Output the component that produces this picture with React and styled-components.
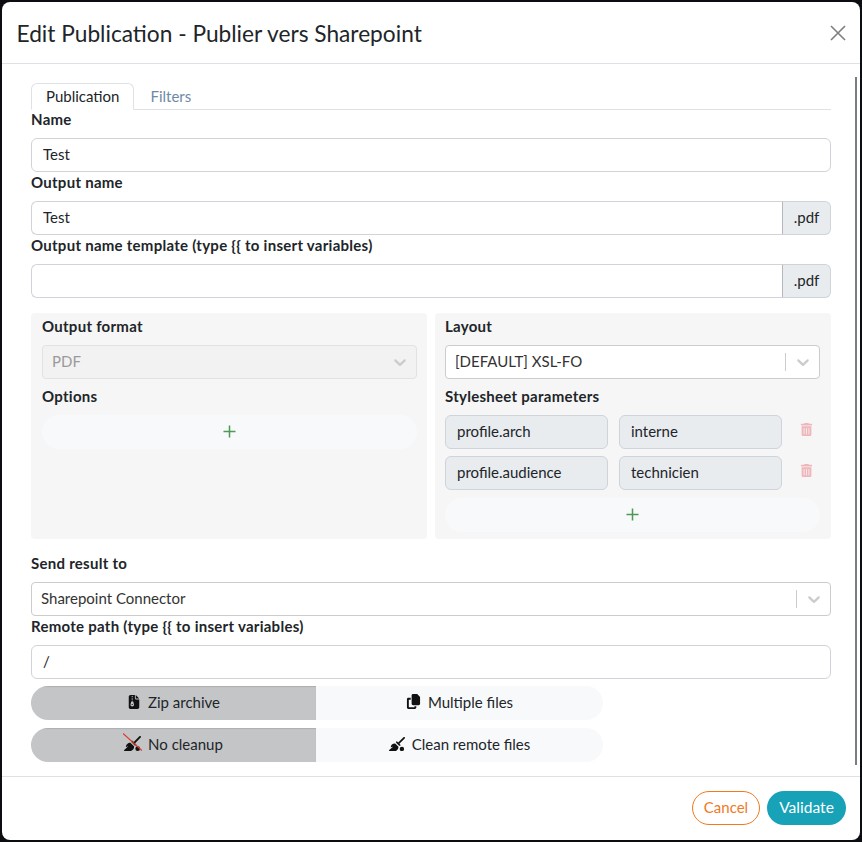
import React from 'react';
import styled, { createGlobalStyle } from 'styled-components';
import { FaFileZipper, FaCopy, FaBroomBall, FaTrashCan } from 'react-icons/fa6';

const Global = createGlobalStyle`
  html, body { margin: 0; padding: 0; background: #0c0d10; }
  * { box-sizing: border-box; }
  body { font-family: "Lato", "Noto Sans", sans-serif; font-size: 15px; color: #212529; }
`;
const Backdrop = styled.div`width: 862px; height: 842px; padding: 2px; overflow: hidden;`;
const Modal = styled.div`position: relative; width: 858px; height: 838px; background: #fff; border-radius: 8px; display: flex; flex-direction: column; overflow: hidden;`;
const Header = styled.header`height: 62px; flex: none; display: flex; align-items: center; justify-content: space-between; padding: 1px 13px 0 14.5px; border-bottom: 1px solid #dee2e6;`;
const Title = styled.h1`margin: 0; font-size: 22.7px; font-weight: 400; color: #212529;`;
const Close = styled.button`border: 0; background: none; padding: 0; width: 18px; height: 18px; color: #7f7f7f; display: flex;`;
const Body = styled.main`flex: 1; padding: 19px 29px 0; min-height: 0;`;
const Scroll = styled.div`position: absolute; right: 3px; top: 75px; width: 2px; height: 688px; background: #7a7e84;`;
const Tabs = styled.nav`display: flex; gap: 1px; height: 27px; border-bottom: 1px solid #dee2e6; margin-bottom: -1px;`;
const Tab = styled.div`
  height: 27px; padding: 0 14px 2px; display: flex; align-items: center;
  color: ${p => p.$active ? '#212529' : '#6c8ba8'};
  border: 1px solid ${p => p.$active ? '#dee2e6' : 'transparent'};
  border-bottom: 1px solid ${p => p.$active ? '#fff' : 'transparent'};
  border-radius: 6px 6px 0 0; background: ${p => p.$active ? '#fff' : 'transparent'};
`;
const Label = styled.label`display: block; font-weight: 700; font-size: 15px; letter-spacing: .27px; line-height: 21px; margin-bottom: 8px; color: #212529;`;
const Input = styled.div`
  height: 34px; border: 1px solid #ced4da; border-radius: 6px; padding: 0 11px 2px; display: flex; align-items: center; color: #212529; background: #fff; flex: 1;
`;
const InputGroup = styled.div`display: flex; height: 34px;`;
const GroupInput = styled(Input)`border-radius: 6px 0 0 6px; border-right: 0;`;
const Addon = styled.div`width: 49px; height: 34px; border: 1px solid #ced4da; border-left-color: #b4b8bc; border-radius: 0 6px 6px 0; background: #e9ecef; display: flex; align-items: center; justify-content: center; padding-bottom: 2px;`;
const Panels = styled.div`display: grid; grid-template-columns: 396px 396px; gap: 8px; margin: 15px 0 14px;`;
const Panel = styled.section`background: #f6f6f6; border-radius: 4px; padding: 3px ${p => p.$right}px 7px ${p => p.$left}px; display: flex; flex-direction: column;`;
const Select = styled.div`
  height: 34px; border: 1px solid ${p => p.$disabled ? '#e2e2e2' : '#ccc'}; border-radius: 4px; display: flex; align-items: center; padding-left: 9px; font-size: 15px;
  background: ${p => p.$disabled ? '#f2f2f2' : '#fff'}; color: ${p => p.$disabled ? '#9a9a9a' : '#333'}; margin-bottom: ${p => p.$mb ?? 0}px;
`;
const SelectValue = styled.span`flex: 1; padding-bottom: 2px;`;
const Sep = styled.span`width: 1px; height: 18px; background: #ccc;`;
const Chevron = styled.span`width: 33px; display: flex; justify-content: center; color: #ccc;`;
const AddBtn = styled.button`
  width: 100%; height: 34px; margin-top: ${p => p.$mt ?? 0}px; border: 0; border-radius: 17px; background: #f8f9fa; color: #4d9a57; display: flex; align-items: center; justify-content: center; padding: 0 0 2px;
`;
const ParamRow = styled.div`display: grid; grid-template-columns: 163px 163px 1fr; column-gap: 11px; margin-bottom: 7px; align-items: center;`;
const ParamInput = styled(Input)`background: #e9ecef;`;
const Trash = styled.span`display: flex; justify-content: center; color: #efb6bb; font-size: 13px; margin-top: -5px;`;
const Toggle = styled.div`display: flex; width: 572px; height: 34px; margin-top: ${p => p.$mt}px; border-radius: 17px; overflow: hidden;`;
const ToggleBtn = styled.button`
  flex: 0 0 ${p => p.$w}px; border: 0; padding: 0 0 3px; display: flex; align-items: center; justify-content: center; gap: 7px; font-family: inherit; font-size: 15px; color: #212529;
  background: ${p => p.$on ? '#c4c5c7' : '#f8f9fa'};
  box-shadow: ${p => p.$on ? 'inset 0 1px 1px rgba(0,0,0,.12)' : 'none'};
`;
const IconWrap = styled.span`position: relative; display: flex; color: #111;`;
const Slash = styled.svg`position: absolute; left: -1px; top: -2px; width: 19px; height: 18px;`;
const Footer = styled.footer`height: 64px; flex: none; border-top: 1px solid #dee2e6; display: flex; justify-content: flex-end; align-items: center; gap: 7px; padding: 0 14px 1px 0;`;
const Cancel = styled.button`height: 34px; width: 68px; border: 1px solid #f07a1e; border-radius: 17px; background: #fff; color: #f07a1e; font-family: inherit; font-size: 15px; padding: 0 0 2px;`;
const Validate = styled.button`height: 34px; width: 79px; border: 0; border-radius: 17px; background: #17a2b8; color: #fff; font-family: inherit; font-size: 15.6px; padding: 0 0 2px;`;

const ChevronIcon = () => (
  <svg width="20" height="20" viewBox="0 0 20 20" fill="currentColor"><path d="M4.516 7.548c.436-.446 1.043-.481 1.576 0L10 11.295l3.908-3.747c.533-.481 1.141-.446 1.574 0 .436.445.408 1.197 0 1.615-.406.418-4.695 4.502-4.695 4.502a1.095 1.095 0 0 1-1.576 0S4.924 9.581 4.516 9.163c-.409-.418-.436-1.17 0-1.615z"/></svg>
);
const PlusIcon = () => (
  <svg width="13" height="13" viewBox="0 0 13 13" stroke="currentColor" strokeWidth="1.5"><path d="M6.5 0.5v12M0.5 6.5h12"/></svg>
);

export default function App() {
  return (
    <Backdrop>
      <Global />
      <Modal>
        <Header>
          <Title>Edit Publication - Publier vers Sharepoint</Title>
          <Close aria-label="Close">
            <svg width="18" height="18" viewBox="0 0 18 18" stroke="currentColor" strokeWidth="1.6"><path d="M2 2l14 14M16 2L2 16"/></svg>
          </Close>
        </Header>
        <Scroll />
        <Body>
          <Tabs>
            <Tab $active>Publication</Tab>
            <Tab>Filters</Tab>
          </Tabs>
          <Label>Name</Label>
          <Input>Test</Input>
          <Label>Output name</Label>
          <InputGroup><GroupInput>Test</GroupInput><Addon>.pdf</Addon></InputGroup>
          <Label>Output name template (type {'{{'} to insert variables)</Label>
          <InputGroup><GroupInput /><Addon>.pdf</Addon></InputGroup>
          <Panels>
            <Panel $left={11} $right={10}>
              <Label>Output format</Label>
              <Select $disabled $mb={7}>
                <SelectValue>PDF</SelectValue>
                <Chevron><ChevronIcon /></Chevron>
              </Select>
              <Label>Options</Label>
              <AddBtn><PlusIcon /></AddBtn>
            </Panel>
            <Panel $left={10} $right={11}>
              <Label>Layout</Label>
              <Select $mb={7}>
                <SelectValue>[DEFAULT] XSL-FO</SelectValue>
                <Sep /><Chevron><ChevronIcon /></Chevron>
              </Select>
              <Label>Stylesheet parameters</Label>
              <ParamRow><ParamInput>profile.arch</ParamInput><ParamInput>interne</ParamInput><Trash><FaTrashCan /></Trash></ParamRow>
              <ParamRow><ParamInput>profile.audience</ParamInput><ParamInput>technicien</ParamInput><Trash><FaTrashCan /></Trash></ParamRow>
              <AddBtn $mt={1}><PlusIcon /></AddBtn>
            </Panel>
          </Panels>
          <Label>Send result to</Label>
          <Select>
            <SelectValue>Sharepoint Connector</SelectValue>
            <Sep /><Chevron><ChevronIcon /></Chevron>
          </Select>
          <Label>Remote path (type {'{{'} to insert variables)</Label>
          <Input>/</Input>
          <Toggle $mt={7}>
            <ToggleBtn $on $w={285}><IconWrap><FaFileZipper size={14} /></IconWrap>Zip archive</ToggleBtn>
            <ToggleBtn $w={287}><IconWrap><FaCopy size={15} /></IconWrap>Multiple files</ToggleBtn>
          </Toggle>
          <Toggle $mt={8}>
            <ToggleBtn $on $w={285}>
              <IconWrap><FaBroomBall size={17} /><Slash viewBox="0 0 19 18"><path d="M0 0.5l19 17" stroke="#e0392b" strokeWidth="1.2"/></Slash></IconWrap>No cleanup
            </ToggleBtn>
            <ToggleBtn $w={287}><IconWrap><FaBroomBall size={16} /></IconWrap>Clean remote files</ToggleBtn>
          </Toggle>
        </Body>
        <Footer>
          <Cancel>Cancel</Cancel>
          <Validate>Validate</Validate>
        </Footer>
      </Modal>
    </Backdrop>
  );
}
